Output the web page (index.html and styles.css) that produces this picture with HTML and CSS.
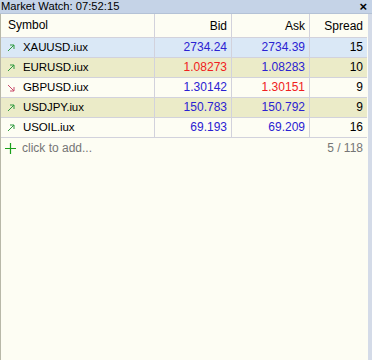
FILE: index.html
```html
<!DOCTYPE html>
<html>
<head>
<meta charset="utf-8">
<link rel="stylesheet" href="styles.css">
</head>
<body>
<div class="titlebar">
  <span class="title">Market Watch: 07:52:15</span>
  <span class="close">×</span>
</div>
<div class="window">
  <div class="table">
    <div class="row head">
      <div class="cell sym">Symbol</div>
      <div class="cell num">Bid</div>
      <div class="cell num">Ask</div>
      <div class="cell num">Spread</div>
    </div>
    <div class="row sel">
      <div class="cell sym"><svg class="arrow up" viewBox="0 0 8 8"><path d="M1 7L7 1M3 1H7V5" fill="none" stroke="currentColor" stroke-width="1"/></svg><span class="name">XAUUSD.iux</span></div>
      <div class="cell num blue">2734.24</div>
      <div class="cell num blue">2734.39</div>
      <div class="cell num">15</div>
    </div>
    <div class="row alt">
      <div class="cell sym"><svg class="arrow up" viewBox="0 0 8 8"><path d="M1 7L7 1M3 1H7V5" fill="none" stroke="currentColor" stroke-width="1"/></svg><span class="name">EURUSD.iux</span></div>
      <div class="cell num red">1.08273</div>
      <div class="cell num blue">1.08283</div>
      <div class="cell num">10</div>
    </div>
    <div class="row">
      <div class="cell sym"><svg class="arrow down" viewBox="0 0 8 8"><path d="M1 1L7 7M7 3V7H3" fill="none" stroke="currentColor" stroke-width="1"/></svg><span class="name">GBPUSD.iux</span></div>
      <div class="cell num blue">1.30142</div>
      <div class="cell num red">1.30151</div>
      <div class="cell num">9</div>
    </div>
    <div class="row alt">
      <div class="cell sym"><svg class="arrow up" viewBox="0 0 8 8"><path d="M1 7L7 1M3 1H7V5" fill="none" stroke="currentColor" stroke-width="1"/></svg><span class="name">USDJPY.iux</span></div>
      <div class="cell num blue">150.783</div>
      <div class="cell num blue">150.792</div>
      <div class="cell num">9</div>
    </div>
    <div class="row">
      <div class="cell sym"><svg class="arrow up" viewBox="0 0 8 8"><path d="M1 7L7 1M3 1H7V5" fill="none" stroke="currentColor" stroke-width="1"/></svg><span class="name">USOIL.iux</span></div>
      <div class="cell num blue">69.193</div>
      <div class="cell num blue">69.209</div>
      <div class="cell num">16</div>
    </div>
  </div>
  <div class="footer">
    <span class="add"><svg class="plus" viewBox="0 0 11 11"><path d="M5.5 0V11M0 5.5H11" fill="none" stroke="currentColor" stroke-width="1.2"/></svg>click to add...</span>
    <span class="count">5 / 118</span>
  </div>
</div>
</body>
</html>
```

FILE: styles.css
```css
html, body {
  margin: 0;
  padding: 0;
}
body {
  width: 372px;
  height: 360px;
  background: #fdfdf3;
  font-family: "Liberation Sans", Arial, sans-serif;
  font-size: 12px;
  color: #000;
  overflow: hidden;
}
.titlebar {
  height: 13px;
  background: #c5d3e7;
  display: flex;
  align-items: center;
  justify-content: space-between;
  padding: 0 5px 0 1px;
  border-bottom: 1px solid #b4c2d6;
}
.title {
  font-size: 11.2px;
  line-height: 13px;
}
.close {
  font-weight: bold;
  font-size: 13px;
  line-height: 13px;
}
.window {
  height: 346px;
  border-left: 1px solid #b8b8a8;
  border-right: 4px solid #d4dbe8;
  box-sizing: border-box;
}
.table {
  display: grid;
  grid-template-columns: 154px 77px 78px 57px;
}
.row {
  display: contents;
}
.cell {
  height: 19px;
  line-height: 19px;
  border-bottom: 1px solid #d2d2dc;
  border-right: 1px solid #d2d2dc;
  white-space: nowrap;
}
.head .cell {
  height: 23px;
  line-height: 25px;
}
.cell:nth-child(4) {
  border-right: none;
}
.sym {
  padding-left: 6px;
  display: flex;
  align-items: center;
}
.head .sym {
  padding-left: 7px;
}
.name {
  font-size: 11.5px;
  letter-spacing: -0.1px;
}
.num {
  text-align: right;
  padding-right: 4px;
}
.sel .cell {
  background: #dae8f6;
}
.alt .cell {
  background: #ebebc8;
}
.arrow {
  width: 8px;
  height: 8px;
  margin-right: 8px;
}
.up { color: #2e9a3e; }
.down { color: #c84a6a; }
.blue { color: #2a22d2; }
.red { color: #f02020; }
.footer {
  height: 20px;
  display: flex;
  align-items: center;
  justify-content: space-between;
  color: #757575;
  padding: 0 5px 0 4px;
}
.plus {
  color: #1aa01a;
  width: 11px;
  height: 11px;
  margin-right: 6px;
}
.add {
  display: flex;
  align-items: center;
}
```
